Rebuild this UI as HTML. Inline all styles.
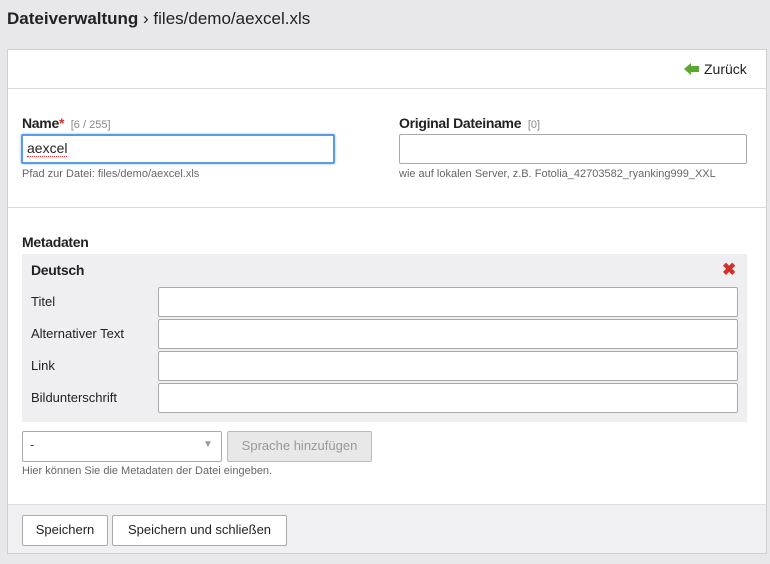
<!DOCTYPE html>
<html><head><meta charset="utf-8"><style>
*{box-sizing:border-box;margin:0;padding:0}
body{width:770px;height:564px;background:#e8e8ea;font-family:"Liberation Sans",sans-serif;color:#222;position:relative;overflow:hidden}
.a{position:absolute;white-space:nowrap}
.panel{position:absolute;left:7px;top:49px;width:760px;height:505px;background:#fff;border:1px solid #d0d0d4}
.hr{position:absolute;left:8px;width:758px;height:1px;background:#dcdcdf}
.inp{position:absolute;background:#fff;border:1px solid #aaa;border-radius:2px}
.lbl{font-size:14px;font-weight:bold;color:#222;letter-spacing:-0.3px}
.cnt{font-size:11px;font-weight:normal;color:#888;letter-spacing:0}
.hint{font-size:11px;color:#666}
.btn{position:absolute;background:#fff;border:1px solid #aaa;border-radius:2px;font-size:13px;text-align:center;line-height:28px;color:#222}
</style></head><body>
<div class="a" style="left:7px;top:9px;font-size:17px;color:#222"><b>Dateiverwaltung</b> › files/demo/aexcel.xls</div>
<div class="panel"></div>
<svg class="a" style="left:684px;top:62px" width="16" height="14" viewBox="0 0 16 14"><path d="M0 7 L7 1 V4 H15 V10 H7 V13 Z" fill="#5aa830"/></svg>
<div class="a" style="left:704px;top:61px;font-size:14px">Zurück</div>
<div class="hr" style="top:88px"></div>
<div class="a lbl" style="left:22px;top:115px">Name<span style="color:#c33">*</span> <span class="cnt">&nbsp;[6 / 255]</span></div>
<div class="inp" style="left:21px;top:134px;width:314px;height:30px;border:2px solid #5b9be6;box-shadow:0 0 2px #8ab8f0"></div>
<div class="a" style="left:27px;top:141px;font-size:14px;border-bottom:1px dotted #e33;line-height:15px">aexcel</div>
<div class="a hint" style="left:22px;top:168px">Pfad zur Datei: files/demo/aexcel.xls</div>
<div class="a lbl" style="left:399px;top:115px">Original Dateiname <span class="cnt">&nbsp;[0]</span></div>
<div class="inp" style="left:399px;top:134px;width:348px;height:30px"></div>
<div class="a hint" style="left:399px;top:168px">wie auf lokalen Server, z.B. Fotolia_42703582_ryanking999_XXL</div>
<div class="hr" style="top:207px"></div>
<div class="a lbl" style="left:22px;top:234px">Metadaten</div>
<div class="a" style="left:22px;top:254px;width:725px;height:168px;background:#efeff1"></div>
<div class="a lbl" style="left:31px;top:262px">Deutsch</div>
<div class="a" style="left:722px;top:260px;font-size:17px;font-weight:bold;color:#d0302a">✖</div>
<div class="a" style="left:31px;top:294px;font-size:13px">Titel</div>
<div class="inp" style="left:158px;top:287px;width:580px;height:30px"></div>
<div class="a" style="left:31px;top:326px;font-size:13px">Alternativer Text</div>
<div class="inp" style="left:158px;top:319px;width:580px;height:30px"></div>
<div class="a" style="left:31px;top:358px;font-size:13px">Link</div>
<div class="inp" style="left:158px;top:351px;width:580px;height:30px"></div>
<div class="a" style="left:31px;top:390px;font-size:13px">Bildunterschrift</div>
<div class="inp" style="left:158px;top:383px;width:580px;height:30px"></div>
<div class="inp" style="left:22px;top:431px;width:200px;height:31px"></div>
<div class="a" style="left:30px;top:437px;font-size:13px;color:#444">-</div>
<div class="a" style="left:203px;top:439px;font-size:10px;color:#999">▼</div>
<div class="btn" style="left:227px;top:431px;width:145px;height:31px;background:#e8e8e8;color:#999;border-color:#bbb;font-size:13px">Sprache hinzufügen</div>
<div class="a hint" style="left:22px;top:465px">Hier können Sie die Metadaten der Datei eingeben.</div>
<div class="a" style="left:8px;top:504px;width:758px;height:49px;background:#f0f0f2;border-top:1px solid #dcdcdf"></div>
<div class="btn" style="left:22px;top:515px;width:86px;height:31px">Speichern</div>
<div class="btn" style="left:112px;top:515px;width:175px;height:31px">Speichern und schließen</div>
</body></html>
